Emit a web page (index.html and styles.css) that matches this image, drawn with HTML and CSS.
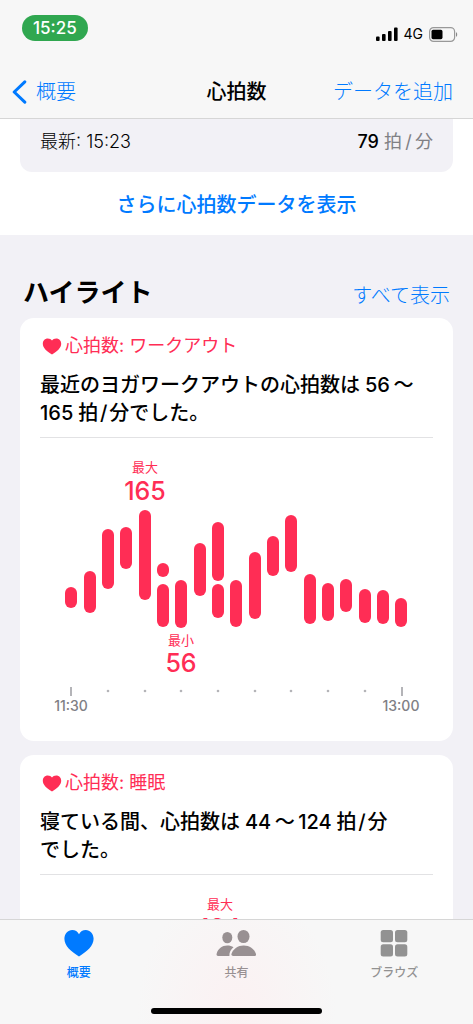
FILE: index.html
```html
<!DOCTYPE html>
<html lang="ja">
<head>
<meta charset="utf-8">
<meta name="viewport" content="width=device-width, initial-scale=1">
<title>心拍数</title>
<link rel="stylesheet" href="styles.css">
</head>
<body>
<div class="app">
  <header class="header">
    <div class="status">
      <span class="status-time">15:25</span>
      <div class="status-right">
        <svg class="signal" width="22" height="14" viewBox="0 0 22 14" aria-hidden="true">
          <rect x="0" y="9.500" width="3.600" height="4.500" rx="1"/><rect x="6" y="7" width="3.600" height="7" rx="1"/><rect x="12" y="4" width="3.600" height="10" rx="1"/><rect x="18" y="0.500" width="3.600" height="13.500" rx="1"/>
        </svg>
        <span class="network">4G</span>
        <svg class="battery" width="29" height="15" viewBox="0 0 29 15" aria-hidden="true">
          <rect x="0.6" y="0.6" width="25" height="13.8" rx="4" fill="none" stroke="#999" stroke-width="1.2"/>
          <rect x="2.5" y="2.8" width="11" height="9.4" rx="1.6"/>
          <path d="M27 5.2c1.6.5 1.6 4.1 0 4.6z" fill="#888"/>
        </svg>
      </div>
    </div>
    <nav class="nav">
      <a class="nav-back" href="#">
        <svg width="15" height="24" viewBox="0 0 15 24" aria-hidden="true"><path d="M12.8 1.8 2.2 12l10.600 10.200" fill="none" stroke="currentColor" stroke-width="3" stroke-linecap="round" stroke-linejoin="round"/></svg>
        概要
      </a>
      <h1 class="nav-title">心拍数</h1>
      <button class="nav-action" type="button">データを追加</button>
    </nav>
  </header>

  <main class="content">
    <section class="summary">
      <div class="latest">
        <span>最新: 15:23</span>
        <span class="latest-value"><b>79</b> 拍&#8201;/&#8201;分</span>
      </div>
      <a class="more" href="#">さらに心拍数データを表示</a>
    </section>

    <section class="highlights">
      <div class="section-head">
        <h2>ハイライト</h2>
        <a href="#">すべて表示</a>
      </div>

      <article class="card">
        <div class="card-kind">
          <svg width="20" height="17" viewBox="0 0 20 17" aria-hidden="true"><path d="M10 16.500C4.600 13.300.8 9.800.8 5.700.8 2.500 3 .4 5.700.4 7.600.4 9.200 1.200 10 2.500 10.800 1.200 12.400.4 14.300.4 17 .4 19.200 2.500 19.200 5.700 19.200 9.800 15.400 13.300 10 16.500z" fill="currentColor"/></svg>
          心拍数: ワークアウト
        </div>
        <h3>最近のヨガワークアウトの心拍数は&#8197;56&#8201;〜<wbr>165&#8197;拍&#8202;/&#8202;分でした。</h3>
        <svg class="chart" viewBox="0 0 393 303" role="img" aria-label="心拍数 11:30から13:00">
          <g class="label">
            <text x="105" y="34">最大</text>
            <text class="value" x="105" y="62">165</text>
            <text x="141" y="207">最小</text>
            <text class="value" x="141" y="234">56</text>
          </g>
          <g class="bars">
            <rect x="25" y="149" width="12" height="21" rx="6"/>
            <rect x="44" y="133" width="12" height="42" rx="6"/>
            <rect x="62" y="91" width="12" height="60" rx="6"/>
            <rect x="80" y="89" width="12" height="42" rx="6"/>
            <rect x="99" y="72" width="12" height="90" rx="6"/>
            <rect x="117" y="125" width="12" height="14" rx="6"/>
            <rect x="117" y="146" width="12" height="43" rx="6"/>
            <rect x="135" y="142" width="12" height="48" rx="6"/>
            <rect x="154" y="105" width="12" height="53" rx="6"/>
            <rect x="172" y="84" width="12" height="59" rx="6"/>
            <rect x="172" y="146" width="12" height="34" rx="6"/>
            <rect x="190" y="142" width="12" height="47" rx="6"/>
            <rect x="209" y="114" width="12" height="67" rx="6"/>
            <rect x="227" y="98" width="12" height="40" rx="6"/>
            <rect x="245" y="77" width="12" height="57" rx="6"/>
            <rect x="264" y="136" width="12" height="50" rx="6"/>
            <rect x="282" y="145" width="12" height="38" rx="6"/>
            <rect x="300" y="141" width="12" height="33" rx="6"/>
            <rect x="319" y="151" width="12" height="34" rx="6"/>
            <rect x="337" y="152" width="12" height="34" rx="6"/>
            <rect x="355" y="160" width="12" height="29" rx="6"/>
          </g>
          <g class="ticks">
            <rect x="30" y="249" width="2" height="9"/>
            <circle cx="68" cy="253" r="1.3"/><circle cx="105" cy="253" r="1.3"/><circle cx="141" cy="253" r="1.3"/><circle cx="178" cy="253" r="1.3"/>
            <circle cx="215" cy="253" r="1.3"/><circle cx="251" cy="253" r="1.3"/><circle cx="288" cy="253" r="1.3"/><circle cx="325" cy="253" r="1.3"/>
            <rect x="361" y="249" width="2" height="9"/>
          </g>
          <g class="hours">
            <text x="31" y="273">11:30</text>
            <text x="361" y="273">13:00</text>
          </g>
        </svg>
      </article>

      <article class="card">
        <div class="card-kind">
          <svg width="20" height="17" viewBox="0 0 20 17" aria-hidden="true"><path d="M10 16.500C4.600 13.300.8 9.800.8 5.700.8 2.500 3 .4 5.700.4 7.600.4 9.200 1.200 10 2.500 10.800 1.200 12.400.4 14.300.4 17 .4 19.200 2.500 19.200 5.700 19.200 9.800 15.400 13.300 10 16.500z" fill="currentColor"/></svg>
          心拍数: 睡眠
        </div>
        <h3>寝ている間、心拍数は&#8197;44&#8201;〜&#8201;124&#8197;拍&#8202;/&#8202;分<span class="keep">でした。</span></h3>
        <svg class="chart" viewBox="0 0 393 303" role="img" aria-label="睡眠中の心拍数">
          <g class="label">
            <text x="180" y="34">最大</text>
            <text class="value" x="180" y="62">124</text>
          </g>
        </svg>
      </article>
    </section>
  </main>

  <footer class="tabs-bar">
    <nav class="tabs">
      <a class="tab active" href="#">
        <svg width="40" height="28" viewBox="0 0 40 28" aria-hidden="true"><path d="M20 27.500C12 22.500 5.400 17 5.400 9.800 5.400 4.600 9 1 13.200 1 16.200 1 18.700 2.600 20 5.200 21.300 2.600 23.800 1 26.800 1 31 1 34.600 4.600 34.600 9.800 34.600 17 28 22.500 20 27.500z" fill="currentColor"/></svg>
        概要
      </a>
      <a class="tab shared" href="#">
        <svg width="40" height="28" viewBox="0 0 40 28" aria-hidden="true"><g fill="currentColor"><ellipse cx="11.300" cy="8.600" rx="5" ry="5.700"/><ellipse cx="27.500" cy="7.500" rx="6" ry="6.600"/><path d="M17.300 27c-1.700 0-2.300-.9-1.700-2.500C17.400 19.800 21.800 16.500 27.700 16.500S38 19.800 39.800 24.500c.6 1.600 0 2.500-1.500 2.500z"/><path d="M2.200 27C.7 27 .2 26.200.7 24.600 2 20 6 16.600 11.300 16.600c2.400 0 4.500.6 6.200 1.600-2.600 2-4.300 4.800-4.100 8.800z"/></g></svg>
        共有
      </a>
      <a class="tab" href="#">
        <svg width="40" height="28" viewBox="0 0 40 28" aria-hidden="true"><g fill="currentColor"><rect x="6.700" y="1" width="12.300" height="12.300" rx="2.500"/><rect x="21" y="1" width="12.300" height="12.300" rx="2.500"/><rect x="6.700" y="15.200" width="12.300" height="12.300" rx="2.500"/><rect x="21" y="15.200" width="12.300" height="12.300" rx="2.500"/></g></svg>
        ブラウズ
      </a>
    </nav>
    <div class="home-indicator"></div>
  </footer>
</div>
</body>
</html>
```

FILE: styles.css
```css
* { box-sizing: border-box; }

body {
  margin: 0;
  font-family: Inter, "Noto Sans CJK JP", sans-serif;
  color: #000;
  background: #fff;
}

h1, h2, h3 { margin: 0; font-weight: 500; }
a { color: #007aff; text-decoration: none; }
svg { flex: none; }

.app {
  display: flex;
  flex-direction: column;
  height: 100vh;
}

/* Header */
.header {
  flex: none;
  background: #f7f7f7;
  border-bottom: 1px solid #d6d6d6;
}

.status {
  display: flex;
  justify-content: space-between;
  align-items: flex-start;
  height: 64px;
  padding: 15px 15px 0 22px;
}

.status-time {
  padding: 0 11px;
  border-radius: 14px;
  background: #30a750;
  color: #fff;
  font-size: 17px;
  font-weight: 500;
  line-height: 26px;
}

.status-right {
  display: flex;
  align-items: center;
  gap: 6px;
  padding-top: 9px;
}

.network { font-size: 14px; line-height: 20px; }

.nav {
  display: grid;
  grid-template-columns: 1fr auto 1fr;
  align-items: center;
  height: 54px;
  padding: 2px 20px 0;
  font-size: 20px;
  line-height: 30px;
}

.nav-back {
  display: flex;
  align-items: center;
  gap: 9px;
  margin-left: -8px;
  font-weight: 300;
}

.nav-title { font-size: 20px; }

.nav-action {
  justify-self: end;
  padding: 0;
  border: 0;
  background: none;
  color: #007aff;
  font: inherit;
  font-weight: 300;
  white-space: nowrap;
}

/* Scrolling content */
.content {
  flex: 1;
  min-height: 0;
  overflow-y: auto;
  scrollbar-width: none;
  background: #f2f1f6;
}

.summary {
  padding: 0 20px 15px;
  background: #fff;
}

.latest {
  display: flex;
  justify-content: space-between;
  padding: 9px 20px 16px;
  border-radius: 0 0 12px 12px;
  background: #f2f1f6;
  font-size: 18px;
  font-weight: 300;
  line-height: 28px;
}

.latest-value { color: #808085; font-weight: 400; }
.latest-value b { color: #000; font-weight: 500; }

.more {
  display: block;
  margin-top: 18px;
  font-size: 20px;
  font-weight: 500;
  line-height: 30px;
  text-align: center;
}

.highlights {
  display: flex;
  flex-direction: column;
  gap: 14px;
  padding: 38px 20px 20px;
}

.section-head {
  display: flex;
  justify-content: space-between;
  align-items: center;
  margin-bottom: -9px;
  padding: 0 3px;
  line-height: 40px;
}

.section-head h2 { font-size: 26px; font-weight: 700; }
.section-head a { padding-top: 6px; font-size: 20px; font-weight: 300; line-height: 34px; }

.card {
  padding: 16px 20px 0;
  border-radius: 14px;
  background: #fff;
}

.card-kind {
  display: flex;
  align-items: center;
  gap: 3px;
  padding-left: 2px;
  color: #ff2d55;
  font-size: 18px;
  font-weight: 400;
  line-height: 24px;
}

.card h3 {
  margin-top: 13px;
  padding-bottom: 10px;
  border-bottom: 1px solid #e2e2e4;
  font-size: 20px;
  line-height: 28px;
}

.keep { display: inline-block; }

.chart { display: block; width: 100%; height: auto; }
.label, .hours { text-anchor: middle; }
.label { fill: #ff2d55; font-size: 13px; font-weight: 400; }
.label .value { font-size: 25px; font-weight: 500; }
.bars { fill: #ff2d55; }
.ticks { fill: #b4b4b8; }
.hours { fill: #808085; font-size: 14px; font-weight: 500; }

/* Tab bar */
.tabs-bar {
  flex: none;
  display: flex;
  flex-direction: column;
  align-items: center;
  padding-bottom: 10px;
  border-top: 1px solid #d6d6d6;
  background: radial-gradient(ellipse 100px 130px at 50% 90%, #fbf1f2, #f7f7f7);
}

.tabs {
  display: grid;
  grid-template-columns: repeat(3, 1fr);
  width: 100%;
  height: 88px;
  padding-top: 9px;
}

.tab {
  display: flex;
  flex-direction: column;
  align-items: center;
  gap: 7px;
  color: #929292;
  font-size: 12px;
  font-weight: 500;
  line-height: 18px;
}

.tab.shared { color: #989092; }
.tab.active { color: #007aff; }

.home-indicator {
  width: 36%;
  height: 6px;
  border-radius: 3px;
  background: #000;
}
```
